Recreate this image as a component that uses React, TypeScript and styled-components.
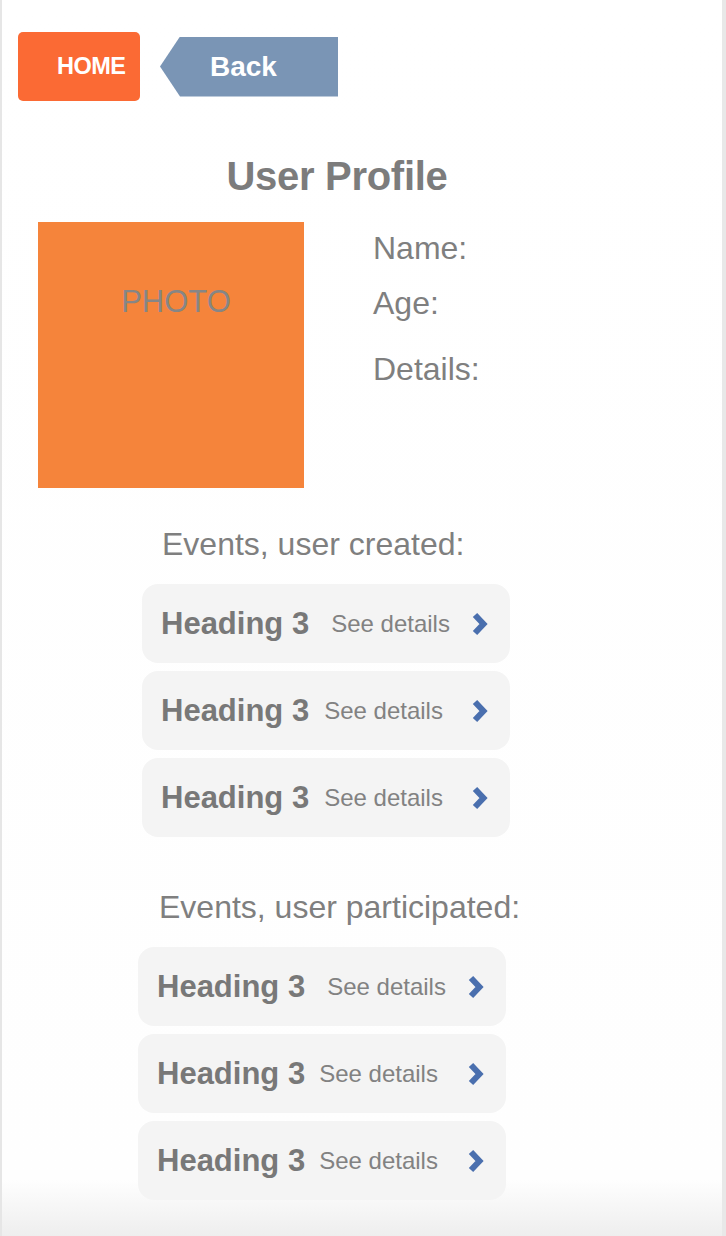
import React from "react";
import styled, { createGlobalStyle } from "styled-components";

const Global = createGlobalStyle`
  html, body { margin: 0; padding: 0; background: #ffffff; }
  * { box-sizing: border-box; }
`;

const Frame = styled.div`
  width: 726px;
  height: 1236px;
  overflow: hidden;
  border-left: 2px solid #e6e6e6;
  border-right: 4px solid #e8e8e8;
  background: linear-gradient(to bottom, #ffffff 0, #fefefe 1180px, #eeeeee 1236px);
  font-family: "Liberation Sans", Arial, sans-serif;
  color: #7f7f7f;
  display: flex;
  flex-direction: column;
`;

const Nav = styled.nav`
  display: flex;
  align-items: center;
  gap: 20px;
  padding: 32px 0 0 16px;
`;

const HomeButton = styled.button`
  width: 122px;
  height: 69px;
  border: none;
  border-radius: 5px;
  background: #fb6a34;
  color: #ffffff;
  font-family: "Liberation Sans", Arial, sans-serif;
  font-weight: 700;
  font-size: 23.5px;
  letter-spacing: -0.5px;
  text-align: left;
  padding: 0 0 0 39px;
  cursor: pointer;
`;

const BackButton = styled.button`
  width: 178px;
  height: 60px;
  border: none;
  background: #7a95b5;
  clip-path: polygon(20px 0, 100% 0, 100% 100%, 20px 100%, 0 50%);
  color: #ffffff;
  font-family: "Liberation Sans", Arial, sans-serif;
  font-weight: 700;
  font-size: 28px;
  text-align: left;
  padding: 0 0 0 50px;
  cursor: pointer;
`;

const Title = styled.h1`
  width: 670px;
  margin: 52px 0 0 0;
  text-align: center;
  font-size: 40px;
  line-height: 46px;
  font-weight: 700;
  color: #7c7c7c;
  letter-spacing: -0.3px;
`;

const ProfileRow = styled.section`
  display: flex;
  gap: 69px;
  margin: 23px 0 0 36px;
`;

const Photo = styled.div`
  width: 266px;
  height: 266px;
  background: #f5843b;
  color: #868686;
  font-size: 31px;
  line-height: 36px;
  text-align: center;
  padding: 62px 0 0 10px;
`;

const Info = styled.div`
  display: flex;
  flex-direction: column;
  padding-top: 8px;
`;

const Label = styled.div<{ $space: number }>`
  font-size: 32px;
  line-height: 37px;
  margin-top: ${(p) => p.$space}px;
  color: #7f7f7f;
`;

const SectionTitle = styled.h2<{ $top: number; $left: number }>`
  margin: ${(p) => p.$top}px 0 0 ${(p) => p.$left}px;
  font-size: 32px;
  line-height: 37px;
  font-weight: 400;
  color: #7f7f7f;
`;

const CardList = styled.ul<{ $left: number }>`
  list-style: none;
  margin: 21px 0 0 ${(p) => p.$left}px;
  padding: 0;
  width: 368px;
  display: flex;
  flex-direction: column;
  gap: 8px;
`;

const Card = styled.li<{ $gap: number }>`
  height: 79px;
  border-radius: 16px;
  background: #f4f4f4;
  display: flex;
  align-items: center;
  gap: ${(p) => p.$gap}px;
  padding: 0 22px 0 19px;
`;

const CardHeading = styled.h3`
  margin: 0;
  font-size: 31px;
  font-weight: 700;
  color: #787878;
`;

const SeeDetails = styled.span`
  font-size: 24px;
  color: #828282;
`;

const Chevron = styled.svg`
  margin-left: auto;
  width: 16px;
  height: 24px;
  flex: none;
`;

const Arrow = () => (
  <Chevron viewBox="0 0 16 24">
    <polyline
      points="3,3 11.5,12 3,21"
      fill="none"
      stroke="#4a6fae"
      strokeWidth="6"
      strokeLinejoin="miter"
    />
  </Chevron>
);

const created = [22, 15, 15];
const participated = [22, 14, 14];

export default function App() {
  return (
    <>
      <Global />
      <Frame>
        <Nav>
          <HomeButton>HOME</HomeButton>
          <BackButton>Back</BackButton>
        </Nav>
        <Title>User Profile</Title>
        <ProfileRow>
          <Photo>PHOTO</Photo>
          <Info>
            <Label $space={0}>Name:</Label>
            <Label $space={18}>Age:</Label>
            <Label $space={29}>Details:</Label>
          </Info>
        </ProfileRow>
        <SectionTitle $top={38} $left={160}>
          Events, user created:
        </SectionTitle>
        <CardList $left={140}>
          {created.map((g, i) => (
            <Card key={i} $gap={g}>
              <CardHeading>Heading 3</CardHeading>
              <SeeDetails>See details</SeeDetails>
              <Arrow />
            </Card>
          ))}
        </CardList>
        <SectionTitle $top={52} $left={157}>
          Events, user participated:
        </SectionTitle>
        <CardList $left={136}>
          {participated.map((g, i) => (
            <Card key={i} $gap={g}>
              <CardHeading>Heading 3</CardHeading>
              <SeeDetails>See details</SeeDetails>
              <Arrow />
            </Card>
          ))}
        </CardList>
      </Frame>
    </>
  );
}
